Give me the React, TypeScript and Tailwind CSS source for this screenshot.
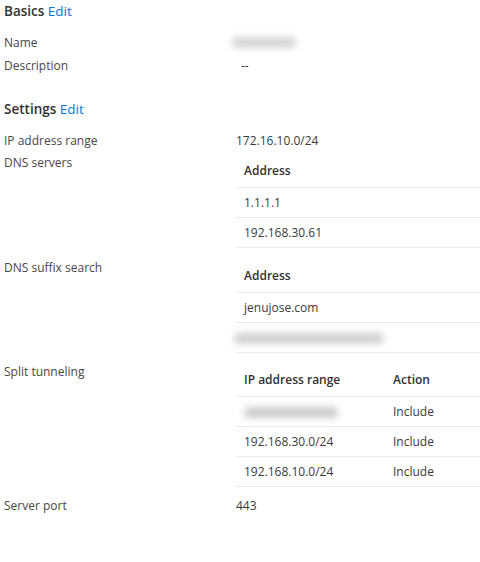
import React from "react";

const font = { fontFamily: '"Open Sans", "Noto Sans", sans-serif' };

function Blur({ w, className = "" }: { w: number; className?: string }) {
  return (
    <span
      className={"inline-block h-[11px] rounded-full blur-[3.5px] align-middle " + className}
      style={{ width: w }}
    />
  );
}

function Label({ children }: { children: React.ReactNode }) {
  return <div className="w-[232px] shrink-0 leading-[22px] text-[#484644]">{children}</div>;
}

function Table({
  headers,
  rows,
  cols,
  mb,
}: {
  headers: string[];
  rows: React.ReactNode[][];
  cols: string;
  mb: string;
}) {
  return (
    <div className={"flex-1 " + mb}>
      <div className={"grid h-[36px] pt-[2px] items-center border-b border-[#edebe9] font-semibold text-[#323130] " + cols}>
        {headers.map((h, i) => (
          <div key={i} className="px-2">{h}</div>
        ))}
      </div>
      {rows.map((r, i) => (
        <div key={i} className={"grid h-[30px] items-center border-b border-[#edebe9] text-[#3b3a39] " + cols}>
          {r.map((c, j) => (
            <div key={j} className="px-2">{c}</div>
          ))}
        </div>
      ))}
    </div>
  );
}

export default function App() {
  return (
    <div className="w-[480px] h-[562px] bg-white pl-1 text-[12px] text-[#323130]" style={font}>
      <div className="h-[22px] leading-[22px] text-[13.5px] mb-[9px]">
        <span className="font-semibold">Basics</span> <span className="text-[#0078d4]">Edit</span>
      </div>
      <div className="flex h-[23px] items-center">
        <Label>Name</Label>
        <div className="flex items-center"><Blur w={64} className="bg-[#d6d4d2] -ml-[4px]" /></div>
      </div>
      <div className="flex h-[23px] items-center">
        <Label>Description</Label>
        <div className="pl-[5px] text-[#3b3a39]">--</div>
      </div>
      <div className="h-[22px] leading-[22px] text-[13.5px] mt-[21px] mb-[10px]">
        <span className="font-semibold">Settings</span> <span className="text-[#0078d4]">Edit</span>
      </div>
      <div className="flex h-[22px] items-center">
        <Label>IP address range</Label>
        <div className="text-[#3b3a39]">172.16.10.0/24</div>
      </div>
      <div className="flex items-start">
        <Label>DNS servers</Label>
        <Table mb="mb-[9px]" cols="grid-cols-1" headers={["Address"]} rows={[["1.1.1.1"], ["192.168.30.61"]]} />
      </div>
      <div className="flex items-start">
        <Label>DNS suffix search</Label>
        <Table
          mb="mb-[8px]"
          cols="grid-cols-1"
          headers={["Address"]}
          rows={[["jenujose.com"], [<Blur key="b" w={150} className="-ml-[10px] bg-[#d2d0ce]" />]]}
        />
      </div>
      <div className="flex items-start">
        <Label>Split tunneling</Label>
        <Table
          mb="mb-[8px]"
          cols="grid-cols-[149px_1fr]"
          headers={["IP address range", "Action"]}
          rows={[
            [<Blur key="a" w={94} className="bg-[#cecccb]" />, "Include"],
            ["192.168.30.0/24", "Include"],
            ["192.168.10.0/24", "Include"],
          ]}
        />
      </div>
      <div className="flex h-[22px] items-center">
        <Label>Server port</Label>
        <div className="text-[#3b3a39]">443</div>
      </div>
    </div>
  );
}
